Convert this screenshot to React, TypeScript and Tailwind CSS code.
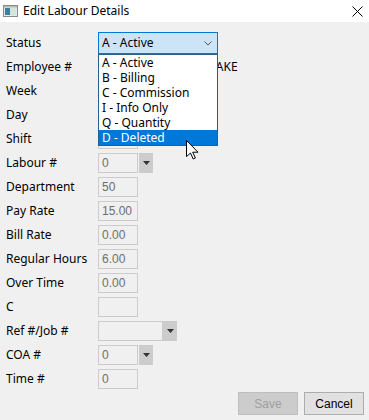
import { FC } from 'react';

const ui = { fontFamily: '"Noto Sans", "Open Sans", sans-serif' };
const ms = { fontFamily: '"Liberation Sans", Arial, sans-serif' };

type Field = {
  label: string;
  value?: string;
  kind?: 'text' | 'combo' | 'wide' | 'hidden';
};

const fields: Field[] = [
  { label: 'Employee #', kind: 'hidden' },
  { label: 'Week', kind: 'hidden' },
  { label: 'Day', kind: 'hidden' },
  { label: 'Shift', kind: 'text' },
  { label: 'Labour #', value: '0', kind: 'combo' },
  { label: 'Department', value: '50' },
  { label: 'Pay Rate', value: '15.00' },
  { label: 'Bill Rate', value: '0.00' },
  { label: 'Regular Hours', value: '6.00' },
  { label: 'Over Time', value: '0.00' },
  { label: 'C', value: '' },
  { label: 'Ref #/Job #', value: '', kind: 'wide' },
  { label: 'COA #', value: '0', kind: 'combo' },
  { label: 'Time #', value: '0' },
];

const options = ['A - Active', 'B - Billing', 'C - Commission', 'I - Info Only', 'Q - Quantity', 'D - Deleted'];

const DropButton: FC = () => (
  <div className="flex h-[20px] w-[14px] items-center justify-center bg-[#cccccc]">
    <svg width="7" height="4" viewBox="0 0 7 4">
      <path d="M0 0h7L3.5 4z" fill="#333" />
    </svg>
  </div>
);

const Box: FC<{ value?: string; width: number }> = ({ value, width }) => (
  <div
    className="flex h-[20px] items-center border border-[#cccccc] bg-[#f0f0f0] px-[3px] text-[12px] text-[#6d6d6d]"
    style={{ ...ms, width }}
  >
    {value}
  </div>
);

const Row: FC<{ field: Field }> = ({ field }) => (
  <div className="flex h-[24px] items-center">
    <div className="w-[92px] text-[12px] text-black" style={ui}>
      {field.label}
    </div>
    {field.kind === 'combo' && (
      <div className="flex items-center gap-[1px]">
        <Box value={field.value} width={40} />
        <DropButton />
      </div>
    )}
    {field.kind === 'wide' && (
      <div className="flex items-center">
        <Box value={field.value} width={65} />
        <DropButton />
      </div>
    )}
    {(field.kind === undefined || field.kind === 'text' || field.kind === 'hidden') && (
      <Box value={field.value} width={40} />
    )}
    {field.label === 'Employee #' && (
      <span className="ml-[30px] text-[12px] text-black" style={ui}>
        JOHN BLAKE
      </span>
    )}
  </div>
);

export default function App() {
  return (
    <div className="relative h-[420px] w-[369px] overflow-hidden bg-[#f0f0f0]" style={ui}>
      <div className="flex h-[22px] items-center bg-white pl-[3px] pr-[6px]">
        <svg width="15" height="12" viewBox="0 0 15 12">
          <rect x="0.5" y="0.5" width="14" height="11" fill="#e8e8e8" stroke="#8a8a8a" />
          <rect x="2" y="3" width="5" height="7" fill="#3f7f9a" />
          <rect x="7" y="3" width="6" height="7" fill="#cfe6d8" />
          <rect x="1" y="1" width="13" height="1.5" fill="#b8b8b8" />
        </svg>
        <span className="ml-[5px] text-[12px] text-black">Edit Labour Details</span>
        <svg className="ml-auto" width="11" height="11" viewBox="0 0 11 11">
          <path d="M0.5 0.5l10 10M10.5 0.5l-10 10" stroke="#000" strokeWidth="1" />
        </svg>
      </div>

      <div className="flex flex-col pl-[6px] pt-[9px]">
        <div className="flex h-[24px] items-center">
          <div className="w-[92px] text-[12px] text-black">Status</div>
          <div className="flex h-[22px] w-[120px] items-center justify-between border border-[#0078d7] bg-[#cce4f7] pl-[3px] pr-[5px] text-[12px] text-black">
            <span>A - Active</span>
            <svg width="8" height="5" viewBox="0 0 8 5">
              <path d="M0.5 0.5L4 4l3.5-3.5" stroke="#555" fill="none" />
            </svg>
          </div>
        </div>
        {fields.map((f) => (
          <Row key={f.label} field={f} />
        ))}
        <div className="mt-[1px] flex justify-end gap-[6px] pr-[5px]">
          <button
            className="h-[23px] w-[60px] border border-[#bfbfbf] bg-[#cccccc] text-[12px] text-[#a0a0a0]"
            style={ms}
          >
            Save
          </button>
          <button
            className="h-[23px] w-[60px] border border-[#adadad] bg-[#e1e1e1] text-[12px] text-black"
            style={ms}
          >
            Cancel
          </button>
        </div>
      </div>

      <div className="absolute left-[98px] top-[54px] w-[120px] border border-[#2b5e8c] bg-white py-0 text-[12px]">
        {options.map((o) => (
          <div
            key={o}
            className={
              o === 'D - Deleted'
                ? 'flex h-[15px] items-center bg-[#0078d7] pl-[3px] text-white'
                : 'flex h-[15px] items-center pl-[3px] text-black'
            }
          >
            {o}
          </div>
        ))}
      </div>

      <svg className="absolute left-[186px] top-[140px]" width="13" height="20" viewBox="0 0 13 20">
        <path d="M0.5 0.5v16l4-3.5 2.7 6 2.2-1-2.7-5.8h5.3z" fill="#fff" stroke="#000" strokeWidth="1" />
      </svg>
    </div>
  );
}
